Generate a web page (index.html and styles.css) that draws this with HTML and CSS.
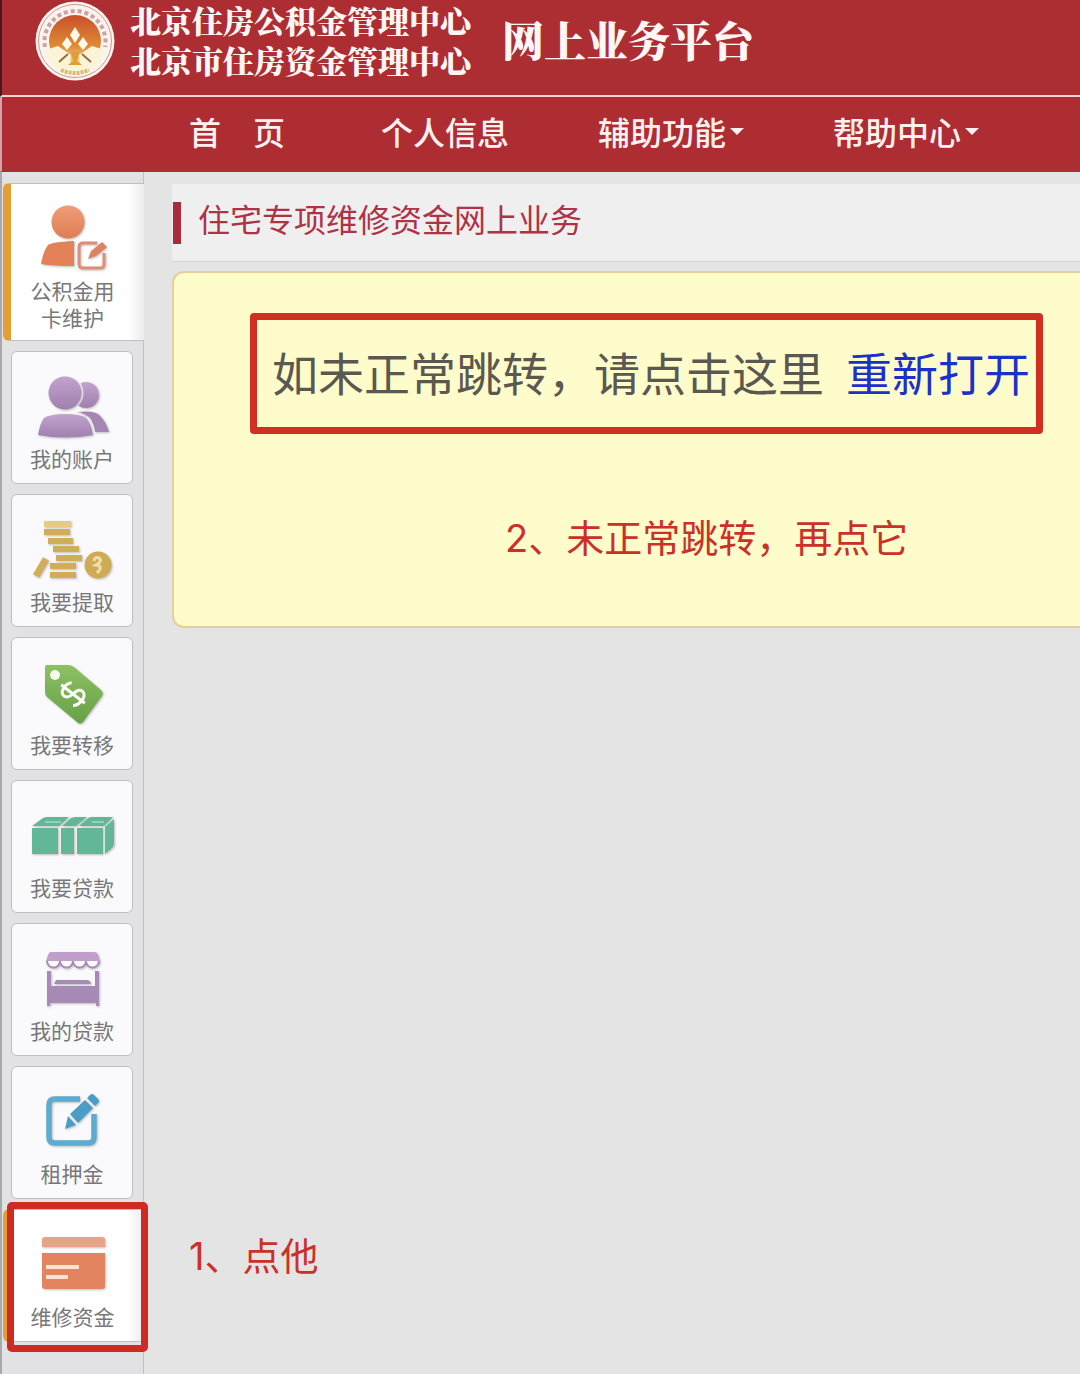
FILE: index.html
```html
<!DOCTYPE html>
<html lang="zh-CN">
<head>
<meta charset="utf-8">
<meta name="viewport" content="width=device-width, initial-scale=1">
<title>网上业务平台</title>
<link rel="stylesheet" href="styles.css">
</head>
<body>
<header class="masthead">
  <svg class="logo" viewBox="0 0 80 80" aria-hidden="true">
    <defs>
      <linearGradient id="seal" x1="0" y1="0" x2="0" y2="1">
        <stop offset="0" stop-color="#c9502a"/><stop offset=".6" stop-color="#e08a35"/><stop offset="1" stop-color="#f5e6b0"/>
      </linearGradient>
    </defs>
    <circle cx="40" cy="40" r="39.500" fill="#fbf3ee"/>
    <circle cx="40" cy="40" r="36.500" fill="none" stroke="#cf9a93" stroke-width="1"/>
    <path d="M10 46A30.500 30.500 0 1 1 70 46" fill="none" stroke="#c9a3a8" stroke-width="4" stroke-dasharray="4 3"/>
    <circle cx="40" cy="40" r="26" fill="url(#seal)"/>
    <path d="M40 26l5 8-5 8-5-8zM32 36l5 7-5 6-5-6zM48 36l5 7-5 6-5-6z" fill="#fffbe8"/>
    <path d="M11 49l12-4 13 9-1 9h10l-1-9 13-9 12 4Q66 70 40 73 14 70 11 49z" fill="#fbf5d8"/>
    <path d="M24 61l9-8M56 61l-9-8" stroke="#96703c" stroke-width="2"/>
    <path d="M36 51h8l-2 9 5 4H33l5-4z" fill="#dea030"/>
    <path d="M26 69q14 6 28 0" fill="none" stroke="#d8bf68" stroke-width="4" stroke-dasharray="3 1"/>
  </svg>
  <p class="org"><span>北京住房公积金管理中心</span><span>北京市住房资金管理中心</span></p>
  <h1 class="platform">网上业务平台</h1>
</header>

<nav class="topnav" aria-label="主导航">
  <a class="home" href="#">首　页</a>
  <a href="#">个人信息</a>
  <button type="button">辅助功能<i class="caret"></i></button>
  <button type="button">帮助中心<i class="caret"></i></button>
</nav>

<div class="layout">
  <nav class="sidebar" aria-label="业务菜单">
    <a class="tile active" href="#">
      <svg class="icon" viewBox="0 -4 90 70" aria-hidden="true">
        <defs><linearGradient id="orange" x1="0" y1="0" x2="0" y2="1"><stop offset="0" stop-color="#ef9d76"/><stop offset="1" stop-color="#df7d56"/></linearGradient></defs>
        <circle cx="40" cy="13" r="16.500" fill="url(#orange)"/>
        <path d="M13 55Q15 43 20 36 24 33 46 32V57Q26 57 13 55z" fill="#e38259"/>
        <path d="M69 34H55q-4 0-4 4v17q0 4 4 4h17q4 0 4-4V44" fill="none" stroke="#df8e75" stroke-width="3"/>
        <path d="M60 50l3-8 11-9 5 5-11 9z" fill="#dc8364"/>
      </svg>
      <span>公积金用<br>卡维护</span>
    </a>
    <a class="tile" href="#">
      <svg class="icon" viewBox="0 -4 90 70" aria-hidden="true">
        <defs>
          <linearGradient id="purple" x1="0" y1="0" x2="0" y2="1"><stop offset="0" stop-color="#c2a3ce"/><stop offset="1" stop-color="#9f80ae"/></linearGradient>
          <mask id="behind" maskUnits="userSpaceOnUse" x="0" y="-4" width="90" height="70">
            <path d="M0-4H90V66H0z" fill="#fff"/>
            <circle cx="38" cy="16" r="18.500"/>
            <path d="M10 59Q12 46 17 41 24 34 38 34 55 34 62 40 67 45 69 60z"/>
          </mask>
        </defs>
        <g mask="url(#behind)">
          <circle cx="59" cy="18" r="13" fill="url(#purple)"/>
          <path d="M50 35Q70 33 74 40 79 45 82 55H60z" fill="#a586b3"/>
        </g>
        <circle cx="38" cy="16" r="16.500" fill="url(#purple)"/>
        <path d="M11 58Q13 46 17 41 24 37 38 37 53 37 59 41 64 46 66 58 38 63 11 58z" fill="url(#purple)"/>
      </svg>
      <span>我的账户</span>
    </a>
    <a class="tile" href="#">
      <svg class="icon" viewBox="0 -4 90 70" aria-hidden="true">
        <g fill="none" stroke="#d2ad58" stroke-width="6">
          <path d="M17 4H44" stroke="#e6cb84"/>
          <path d="M17 12H43M21 21H46M26 29H52M29 38H55M23 46H49M23 55H49"/>
          <path d="M9 56L19 39" stroke-width="7"/>
        </g>
        <circle cx="71" cy="45" r="13.500" fill="#cfab55"/>
        <path d="M67 41q1-5 5-3 4 3-3 7 8 1 1 8" fill="none" stroke="#efdfb4" stroke-width="3"/>
      </svg>
      <span>我要提取</span>
    </a>
    <a class="tile" href="#">
      <svg class="icon" viewBox="0 -4 90 70" aria-hidden="true">
        <defs><linearGradient id="green" x1="0" y1="0" x2="0" y2="1"><stop offset="0" stop-color="#8cc164"/><stop offset="1" stop-color="#68a044"/></linearGradient></defs>
        <path d="M20 2H41q3 0 6 2L74 27q3 3 1 6L56 59q-3 3-6 0L20 34q-2-2-2-5V4q0-2 2-2z" fill="url(#green)"/>
        <circle cx="28" cy="12" r="5" fill="#f4faef"/>
        <g transform="translate(46 31) rotate(-52)" fill="none" stroke="#fbfdf7" stroke-width="3">
          <path d="M8-8Q4-12-1-11-8-10-7-5-6-1 0 0 8 1 8 6 7 11 0 11-6 11-9 7M0-15V15"/>
        </g>
      </svg>
      <span>我要转移</span>
    </a>
    <a class="tile" href="#">
      <svg class="icon" viewBox="0 -4 90 70" aria-hidden="true">
        <g fill="#62b797">
          <path d="M5 22H31V48H5zM34 22H47V48H34zM50 22H76V48H50zM78 21l9-8V38q0 2-2 4l-7 6z"/>
          <path d="M5 20l11-8q2-1 4-1H42l-10 9zM35 20l9-8 4-1H60l-11 9zM52 20l9-8q2-1 4-1H86l-9 9z"/>
        </g>
        <path d="M18 16H34M65 16H77" stroke="#a5dac4" stroke-width="1.500"/>
      </svg>
      <span>我要贷款</span>
    </a>
    <a class="tile" href="#">
      <svg class="icon" viewBox="0 -4 90 70" aria-hidden="true">
        <path d="M24 3H67q3 0 4 3l2 6H19l2-6q1-3 3-3z" fill="#c0a0cb"/>
        <g fill="#fbf9fc" stroke="#aa8bb7" stroke-width="2">
          <path d="M20 12a6 6 0 0 0 13 0 6 6 0 0 0 13 0 6 6 0 0 0 13 0 6 6 0 0 0 13 0"/>
        </g>
        <path d="M20 22h4V37H68V22h4V57H69V54H23v3H20zM29 31H60q3 0 4 4H27z" fill="#a88ab6"/>
      </svg>
      <span>我的贷款</span>
    </a>
    <a class="tile" href="#">
      <svg class="icon" viewBox="0 -4 90 70" aria-hidden="true">
        <path d="M53 7H28q-6 0-6 6V45q0 6 6 6H61q6 0 6-6V22" fill="none" stroke="#5dabd0" stroke-width="5.500"/>
        <path d="M38 37l3-13 8 9zM43 22L58 8l8 8-15 15zM60 6l3-3q2-2 4 0l4 4q2 2 0 4l-3 3z" fill="#4b9cc6"/>
      </svg>
      <span>租押金</span>
    </a>
    <a class="tile active marked" href="#">
      <svg class="icon" viewBox="0 -4 90 70" aria-hidden="true">
        <path d="M17 2H74q3 0 3 3v7H14V5q0-3 3-3z" fill="#e7a387"/>
        <path d="M14 18H77V51q0 3-3 3H17q-3 0-3-3z" fill="#e38460"/>
        <path d="M18 32H51M18 42H40" stroke="#fbe3d3" stroke-width="4"/>
      </svg>
      <span>维修资金</span>
    </a>
    <p class="note step-one">1、点他</p>
  </nav>

  <main class="content">
    <div class="section-head"><h2>住宅专项维修资金网上业务</h2></div>
    <section class="panel">
      <p class="redirect"><span>如未正常跳转，请点击这里</span><a href="#">重新打开</a></p>
      <p class="note step-two">2、未正常跳转，再点它</p>
    </section>
  </main>
</div>
</body>
</html>
```
FILE: styles.css
```css
* { box-sizing: border-box; }

body {
  margin: 0;
  min-height: 100vh;
  display: flex;
  flex-direction: column;
  overflow-x: hidden;
  background: #e4e4e4;
  font-family: "Noto Sans CJK SC", sans-serif;
}

p, h1, h2 { margin: 0; font-weight: 400; }
a { color: inherit; text-decoration: none; }

.masthead {
  display: flex;
  align-items: flex-start;
  height: 97px;
  padding-left: 33px;
  border-left: 2px solid #4a1820;
  border-bottom: 2px solid #efd6d8;
  background: #ac2e32;
  color: #fff6f5;
  font-family: "Noto Serif CJK SC", "Noto Sans CJK SC", serif;
  white-space: nowrap;
}

.logo { flex: none; width: 80px; height: 80px; margin-top: 1px; }

.org {
  display: flex;
  flex-direction: column;
  width: 352px;
  margin-left: 15px;
  font-size: 31px;
  font-weight: 900;
  line-height: 40px;
}

.platform {
  margin-left: 20px;
  font-size: 42px;
  font-weight: 900;
  line-height: 78px;
}

.topnav {
  display: flex;
  align-items: center;
  gap: 89px;
  height: 75px;
  padding: 0 0 6px 187px;
  border-left: 2px solid #d3a3ac;
  border-bottom: 1px solid #8f3a40;
  background: #ad2d33;
  color: #fff1f0;
  font-size: 32px;
  font-weight: 500;
  line-height: 40px;
  white-space: nowrap;
}

.topnav .home { padding-right: 7px; }

.topnav button {
  display: flex;
  align-items: center;
  gap: 4px;
  padding: 0;
  border: 0;
  background: none;
  color: inherit;
  font: inherit;
}

.caret {
  border: 7px solid transparent;
  border-top-color: currentColor;
  border-bottom: 0;
}

.layout { flex: 1; display: flex; }

.sidebar {
  position: relative;
  flex: none;
  display: flex;
  flex-direction: column;
  gap: 10px;
  width: 144px;
  padding: 11px 0 20px 9px;
  border-left: 2px solid #a9a9ae;
  border-right: 1px solid #c2c2c4;
  background: #e2e2e4;
}

.tile {
  display: flex;
  flex-direction: column;
  align-items: center;
  gap: 2px;
  width: 122px;
  min-height: 133px;
  padding: 21px 0 9px;
  border: 1px solid #bfbfc2;
  border-radius: 6px;
  background: #fafafc;
  color: #77777a;
  font-size: 21px;
  line-height: 27px;
  text-align: center;
}

.tile.active {
  position: relative;
  width: auto;
  margin: 0 -1px 0 -8px;
  padding-right: 10px;
  border-width: 1px 0 1px 8px;
  border-left-color: #e2a034;
  border-radius: 6px 0 0 6px;
  background: linear-gradient(to right, #fff 88%, #ececee);
}

.icon {
  flex: none;
  width: 90px;
  height: 70px;
  filter: drop-shadow(1px 1px 1px #00000040);
}

/* Hand-drawn style highlight box around the selected service */
.marked::after {
  content: "";
  position: absolute;
  inset: -8px -4px -11px -4px;
  border: 7px solid #d02a24;
  border-radius: 5px;
}

.note {
  color: #cb3029;
  font-family: Inter, "Noto Sans CJK SC", sans-serif;
  font-size: 38px;
  line-height: 52px;
  white-space: nowrap;
}

.step-one {
  position: absolute;
  left: 187px;
  bottom: 92px;
}

.content {
  flex: 1;
  min-width: 0;
  padding: 12px 0 0 28px;
}

.section-head {
  height: 78px;
  padding: 18px 0 0 1px;
  border-bottom: 1px solid #d2d4d6;
  background: #efeff0;
}

.section-head h2 {
  height: 42px;
  padding-left: 17px;
  border-left: 8px solid #a52c38;
  color: #ae3345;
  font-size: 32px;
  line-height: 32px;
}

.panel {
  display: flex;
  flex-direction: column;
  align-items: flex-start;
  gap: 78px;
  margin-top: 9px;
  padding: 40px 0 62px 76px;
  border: 2px solid #e6cf98;
  border-right: 0;
  border-radius: 12px 0 0 12px;
  background: #fefcca;
}

.redirect {
  display: flex;
  align-items: center;
  gap: 22px;
  height: 121px;
  padding: 0 6px 6px 15px;
  border: 7px solid #d32e22;
  border-radius: 4px;
  color: #5a5850;
  font-size: 46px;
  line-height: 60px;
  white-space: nowrap;
}

.redirect a { color: #1c30cc; }

.step-two { padding-left: 255px; }
```
